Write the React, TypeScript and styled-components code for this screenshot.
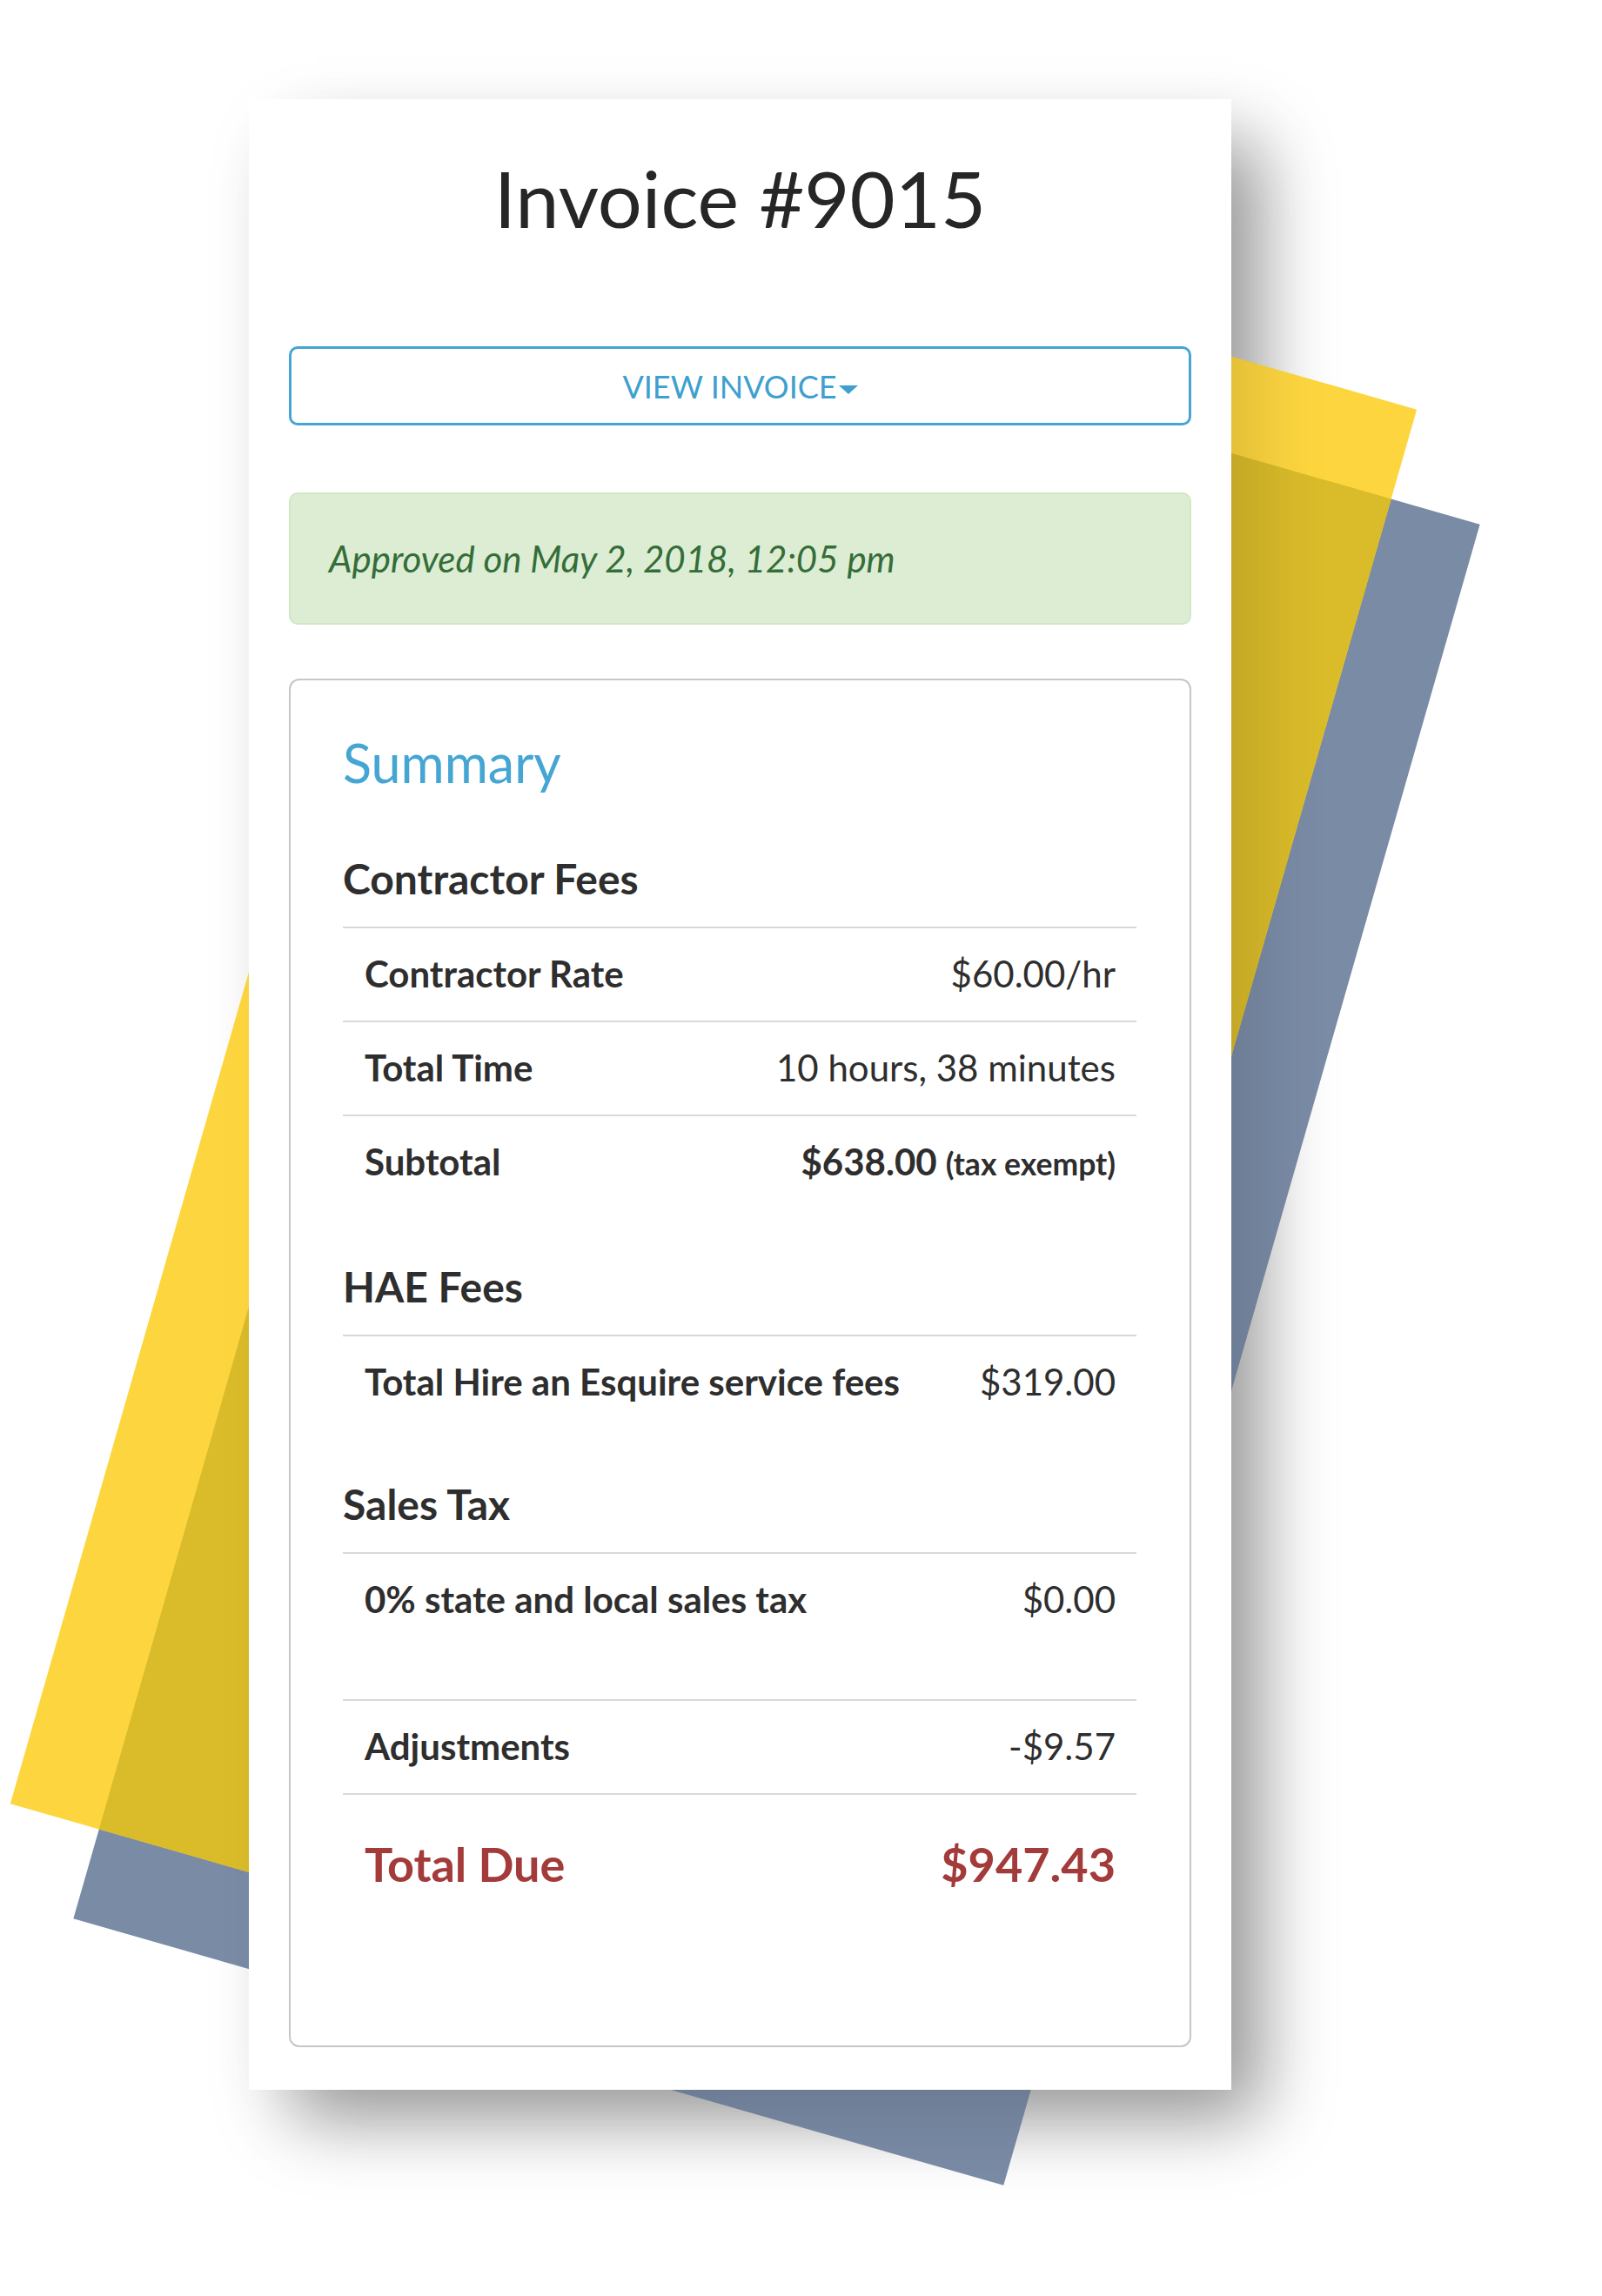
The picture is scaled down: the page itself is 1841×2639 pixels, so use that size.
import React from "react";
import styled, { createGlobalStyle } from "styled-components";

const GlobalStyle = createGlobalStyle`
  html, body { margin: 0; padding: 0; background: #ffffff; }
  body { font-family: Lato, "Open Sans", "Liberation Sans", sans-serif; color: #333; }
  * { box-sizing: border-box; }
`;

const Stage = styled.div`
  position: relative;
  z-index: 0;
  width: 1841px;
  height: 2639px;
  padding: 114px 0 0 286px;
  overflow: hidden;
  background: #fff;
`;

const Backdrop = styled.svg`
  position: absolute;
  left: 0;
  top: 0;
`;

/* The card casts a strong shadow beneath the coloured sheets (::before)
   and a soft one over them (its own box-shadow). */
const Card = styled.main`
  position: relative;
  width: 1129px;
  background: #ffffff;
  padding: 59px 46px 49px;
  display: flex;
  flex-direction: column;
  box-shadow: 40px 40px 80px -10px rgba(0, 0, 0, 0.13);

  &::before {
    content: "";
    position: absolute;
    inset: 0;
    z-index: -1;
    box-shadow: 40px 40px 80px -10px rgba(0, 0, 0, 0.34);
  }
`;

const Title = styled.h1`
  margin: 0;
  font-family: Lato, sans-serif;
  font-weight: 400;
  font-size: 90px;
  line-height: 108px;
  color: #262626;
  text-align: center;
`;

const ViewButton = styled.button`
  margin-top: 117px;
  height: 91px;
  width: 100%;
  border: 3px solid #45a5d3;
  border-radius: 10px;
  background: #fff;
  color: #3f9fcf;
  font-family: Lato, sans-serif;
  font-size: 36px;
  font-weight: 400;
  text-transform: uppercase;
  display: flex;
  align-items: center;
  justify-content: center;
  cursor: pointer;
`;

const Caret = styled.span`
  display: inline-block;
  width: 0;
  height: 0;
  margin-left: 2px;
  margin-top: 8px;
  border-top: 10px solid #3f9fcf;
  border-left: 11px solid transparent;
  border-right: 11px solid transparent;
`;

const Alert = styled.div`
  margin-top: 77px;
  height: 152px;
  border: 2px solid #d2e7c6;
  border-radius: 10px;
  background: #dcedd4;
  display: flex;
  align-items: center;
  padding: 0 44px;
  color: #356d38;
  font-family: Lato, sans-serif;
  font-style: italic;
  font-size: 42px;
`;

const SummaryBox = styled.section`
  margin-top: 62px;
  border: 2px solid #c6c6c6;
  border-radius: 12px;
  padding: 59px 61px 174px 60px;
  display: flex;
  flex-direction: column;
`;

const SummaryTitle = styled.h2`
  margin: 0;
  font-family: Lato, sans-serif;
  font-weight: 400;
  font-size: 61px;
  line-height: 72px;
  color: #45a5d3;
`;

const Section = styled.div<{ $gap: number }>`
  margin-top: ${(p) => p.$gap}px;
  display: flex;
  flex-direction: column;
`;

const SectionHeading = styled.h3`
  margin: 0 0 26px;
  font-family: Lato, sans-serif;
  font-weight: 700;
  font-size: 48px;
  line-height: 58px;
  color: #2e2e2e;
`;

const Row = styled.div<{ $gap?: number }>`
  margin-top: ${(p) => p.$gap ?? 0}px;
  display: flex;
  justify-content: space-between;
  align-items: baseline;
  border-top: 2px solid #d9d9d9;
  padding: 22px 24px 24px 25px;
  line-height: 60px;
  font-family: Lato, sans-serif;
  font-size: 42px;
  color: #2e2e2e;
`;

const Label = styled.span`
  font-weight: 700;
`;

const Value = styled.span<{ $bold?: boolean }>`
  font-weight: ${(p) => (p.$bold ? 700 : 400)};
`;

const Note = styled.span`
  font-size: 35.5px;
  font-weight: 700;
  margin-left: 10px;
`;

const TotalRow = styled.div`
  display: flex;
  justify-content: space-between;
  align-items: baseline;
  border-top: 2px solid #d9d9d9;
  padding: 46px 24px 0 25px;
  line-height: 68px;
  font-family: Lato, sans-serif;
  font-size: 54px;
  font-weight: 700;
  color: #a33b3b;
`;

type Line = { label: string; value: React.ReactNode };

const sections: { heading: string; gap: number; lines: Line[] }[] = [
  {
    heading: "Contractor Fees",
    gap: 68,
    lines: [
      { label: "Contractor Rate", value: <Value>$60.00/hr</Value> },
      { label: "Total Time", value: <Value>10 hours, 38 minutes</Value> },
      {
        label: "Subtotal",
        value: (
          <Value $bold>
            $638.00<Note>(tax exempt)</Note>
          </Value>
        ),
      },
    ],
  },
  {
    heading: "HAE Fees",
    gap: 58,
    lines: [{ label: "Total Hire an Esquire service fees", value: <Value>$319.00</Value> }],
  },
  {
    heading: "Sales Tax",
    gap: 58,
    lines: [{ label: "0% state and local sales tax", value: <Value>$0.00</Value> }],
  },
];

const deg = 16;
const W = 1112;
const H = 1986;
const yellow = { cx: 820, cy: 1272 };
const blue = { cx: 892.5, cy: 1404 };

function Shapes() {
  return (
    <Backdrop width={1841} height={2639} viewBox="0 0 1841 2639">
      <defs>
        <clipPath id="yellowClip">
          <rect
            x={yellow.cx - W / 2}
            y={yellow.cy - H / 2}
            width={W}
            height={H}
            transform={`rotate(${deg} ${yellow.cx} ${yellow.cy})`}
          />
        </clipPath>
      </defs>
      <rect
        x={blue.cx - W / 2}
        y={blue.cy - H / 2}
        width={W}
        height={H}
        fill="#7a8ba6"
        transform={`rotate(${deg} ${blue.cx} ${blue.cy})`}
      />
      <rect
        x={yellow.cx - W / 2}
        y={yellow.cy - H / 2}
        width={W}
        height={H}
        fill="#fdd63f"
        transform={`rotate(${deg} ${yellow.cx} ${yellow.cy})`}
      />
      <g clipPath="url(#yellowClip)">
        <rect
          x={blue.cx - W / 2}
          y={blue.cy - H / 2}
          width={W}
          height={H}
          fill="#dabb2a"
          transform={`rotate(${deg} ${blue.cx} ${blue.cy})`}
        />
      </g>
    </Backdrop>
  );
}

export default function App() {
  return (
    <>
      <GlobalStyle />
      <Stage>
        <Shapes />
        <Card>
          <Title>Invoice #9015</Title>
          <ViewButton>
            View Invoice
            <Caret />
          </ViewButton>
          <Alert>Approved on May 2, 2018, 12:05 pm</Alert>
          <SummaryBox>
            <SummaryTitle>Summary</SummaryTitle>
            {sections.map((s) => (
              <Section key={s.heading} $gap={s.gap}>
                <SectionHeading>{s.heading}</SectionHeading>
                {s.lines.map((l) => (
                  <Row key={l.label}>
                    <Label>{l.label}</Label>
                    {l.value}
                  </Row>
                ))}
              </Section>
            ))}
            <Row $gap={61}>
              <Label>Adjustments</Label>
              <Value>-$9.57</Value>
            </Row>
            <TotalRow>
              <span>Total Due</span>
              <span>$947.43</span>
            </TotalRow>
          </SummaryBox>
        </Card>
      </Stage>
    </>
  );
}
